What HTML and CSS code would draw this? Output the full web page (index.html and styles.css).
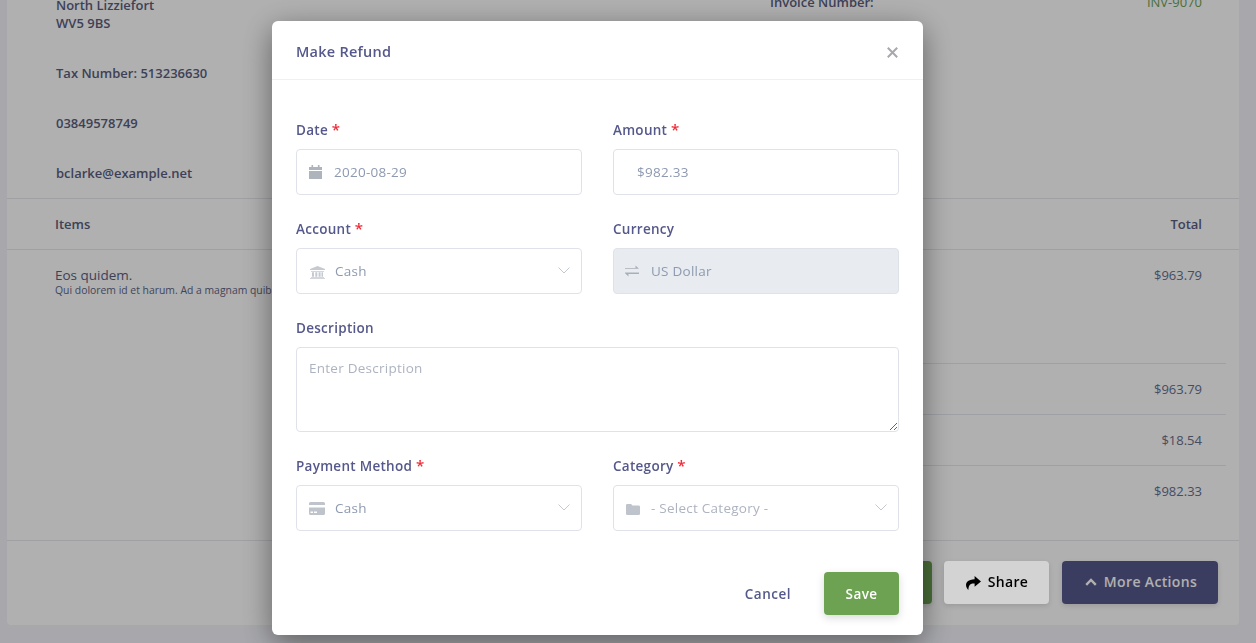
FILE: index.html
```html
<!DOCTYPE html>
<html lang="en">
<head>
<meta charset="utf-8">
<title>Make Refund</title>
<link rel="stylesheet" href="styles.css">
</head>
<body>
<main class="page">
  <section class="card">
    <div class="info">
      <div class="from">
        <p class="line">North Lizziefort<br>WV5 9BS</p>
        <p class="line">Tax Number: 513236630</p>
        <p class="line">03849578749</p>
        <p class="line">bclarke@example.net</p>
      </div>
      <div class="meta">
        <span>Invoice Number:</span>
        <span class="inv">INV-9070</span>
      </div>
    </div>
    <div class="thead"><span>Items</span><span>Total</span></div>
    <div class="item">
      <div class="item-text">
        <div class="item-name">Eos quidem.</div>
        <div class="item-desc">Qui dolorem id et harum. Ad a magnam quibusdam.</div>
      </div>
      <span class="amount">$963.79</span>
    </div>
    <div class="totals">
      <div class="total-row"><span class="amount">$963.79</span></div>
      <div class="total-row"><span class="amount">$18.54</span></div>
      <div class="total-row last"><span class="amount">$982.33</span></div>
    </div>
    <div class="actions">
      <button class="btn btn-green" type="button"></button>
      <button class="btn btn-share" type="button">
        <svg class="ico-share" viewBox="0 0 16 14"><path d="M9.600 0 16 5.400 9.600 10.800V7.500C5.800 7.300 3.600 8.300 3.400 14 .3 11.300-1.500 3.800 9.600 3.300Z"/></svg>
        Share
      </button>
      <button class="btn btn-more" type="button">
        <svg class="ico-up" viewBox="0 0 12 8"><path d="M1.200 6.800 6 2l4.800 4.800"/></svg>
        More Actions
      </button>
    </div>
  </section>
</main>

<div class="overlay">
  <div class="modal">
    <header class="modal-head">
      <h2>Make Refund</h2>
      <svg class="close" viewBox="0 0 11 11"><path d="M.8.800l9.400 9.400M10.200.800.800 10.200"/></svg>
    </header>
    <form class="modal-body">
      <div class="group">
        <label>Date <b>*</b></label>
        <div class="field">
          <svg class="ico ico-cal" viewBox="0 0 13 14"><path d="M2.500 0h1.600v2H8.900V0h1.600v2H13v3H0V2h2.500zM0 6h13v8H0z"/></svg>
          <span class="val">2020-08-29</span>
        </div>
      </div>
      <div class="group">
        <label>Amount <b>*</b></label>
        <div class="field field-amt"><span class="val">$982.33</span></div>
      </div>
      <div class="group">
        <label>Account <b>*</b></label>
        <div class="field">
          <svg class="ico ico-bank" viewBox="0 0 15 13"><path d="M7.500 0 15 3v1H0V3zM1 5h13v.8H1zM2 6.300h2v4.400H2zM5.300 6.300h2v4.400h-2zM8.600 6.300h2v4.400h-2zM11.500 6.300h1.500v4.400h-1.500zM1 11.200h13v.8H1zM0 12.300h15v.7H0z"/></svg>
          <span class="val">Cash</span>
          <svg class="caret" viewBox="0 0 12 7"><path d="M.5.500 6 6l5.500-5.500"/></svg>
        </div>
      </div>
      <div class="group">
        <label>Currency</label>
        <div class="field field-off">
          <svg class="ico ico-swap" viewBox="0 0 14 12"><path d="M0 3h10.500V.5L14 3.800H0zM14 7.500v1.500H3.500v2.500L0 8.200V7.500z"/></svg>
          <span class="val">US Dollar</span>
        </div>
      </div>
      <div class="group wide">
        <label>Description</label>
        <textarea class="area" placeholder="Enter Description"></textarea>
      </div>
      <div class="group">
        <label>Payment Method <b>*</b></label>
        <div class="field">
          <svg class="ico ico-cc" viewBox="0 0 16 13"><path d="M1.500 0h13A1.500 1.500 0 0 1 16 1.500V3H0V1.500A1.500 1.500 0 0 1 1.500 0zM0 5.500h16v6a1.500 1.500 0 0 1-1.500 1.500h-13A1.500 1.500 0 0 1 0 11.500zM1.500 9.500V11h2.500V9.500zM5 9.500V11h3V9.500z" fill-rule="evenodd"/></svg>
          <span class="val">Cash</span>
          <svg class="caret" viewBox="0 0 12 7"><path d="M.5.500 6 6l5.500-5.500"/></svg>
        </div>
      </div>
      <div class="group">
        <label>Category <b>*</b></label>
        <div class="field">
          <svg class="ico ico-folder" viewBox="0 0 14 11"><path d="M1.300 0h3.800l1.300 1.600h6.300A1.300 1.300 0 0 1 14 2.900v6.800A1.300 1.300 0 0 1 12.700 11H1.300A1.300 1.300 0 0 1 0 9.700V1.300A1.300 1.300 0 0 1 1.300 0z"/></svg>
          <span class="val muted">- Select Category -</span>
          <svg class="caret" viewBox="0 0 12 7"><path d="M.5.500 6 6l5.500-5.500"/></svg>
        </div>
      </div>
    </form>
    <footer class="modal-foot">
      <button class="link" type="button">Cancel</button>
      <button class="save" type="button">Save</button>
    </footer>
  </div>
</div>
</body>
</html>
```

FILE: styles.css
```css
* { box-sizing: border-box; }

html, body {
  margin: 0;
  height: 643px;
  overflow: hidden;
}

body {
  background: #f3f4fa;
  font-family: "Open Sans", "Noto Sans", sans-serif;
  color: #55588b;
}

.page {
  padding: 0 17px 0 7px;
}

.card {
  background: #fff;
  height: 625px;
  border-radius: 0 0 4px 4px;
  color: #5a5e80;
  font-size: 13px;
  overflow: hidden;
}

.info {
  display: flex;
  justify-content: space-between;
  height: 199px;
  padding: 0 37px 0 49px;
  border-bottom: 1px solid #e6e8ee;
  font-weight: 600;
}

.from { margin-top: -4px; width: 714px; }

.line {
  margin: 0 0 32px;
  line-height: 18px;
}

.meta {
  flex: 1;
  display: flex;
  justify-content: space-between;
  margin-top: -7px;
  line-height: 18px;
}

.inv { color: #6da252; font-weight: 400; }

.thead {
  display: flex;
  justify-content: space-between;
  align-items: center;
  height: 51px;
  padding: 0 37px 0 48px;
  border-bottom: 1px solid #e6e8ee;
  font-weight: 600;
}

.item {
  display: flex;
  justify-content: space-between;
  height: 113px;
  padding: 16px 37px 0 48px;
}

.item-name { font-size: 13.500px; line-height: 18px; }
.item-desc { font-size: 10.400px; line-height: 12px; color: #5f6585; }
.amount { line-height: 18px; color: #65708f; }

.totals { margin-left: 50%; padding-right: 13px; }

.total-row {
  display: flex;
  justify-content: flex-end;
  height: 51px;
  padding: 16px 24px 0 0;
  border-top: 1px solid #e6e8ee;
}

.total-row.last { height: 75px; }

.actions {
  display: flex;
  justify-content: flex-end;
  gap: 12px;
  padding: 20px 21px 0 0;
  border-top: 1px solid #e6e8ee;
}

.btn {
  display: flex;
  align-items: center;
  justify-content: center;
  gap: 7px;
  height: 43px;
  padding: 0 0 2px;
  border: 0;
  border-radius: 4px;
  font: 600 14px "Open Sans", sans-serif;
  letter-spacing: .35px;
  box-shadow: 0 2px 5px rgba(0, 0, 0, .12);
}

.btn-green { width: 120px; background: #6da252; color: #fff; }
.btn-share { width: 105px; background: #d3d3d3; color: #000; z-index: 20; }
.btn-more { width: 156px; margin-left: 1px; padding-left: 2px; background: #55588b; color: #fff; }

.ico-share { width: 16px; height: 14px; fill: #000; margin-top: 2px; }
.ico-up { width: 12px; height: 8px; fill: none; stroke: #fff; stroke-width: 2.400; }

.overlay {
  position: fixed;
  inset: 0;
  z-index: 10;
  display: flex;
  align-items: flex-start;
  padding: 21px 0 0 272px;
  background: rgba(0, 0, 0, .31);
}

.modal {
  width: 651px;
  background: #fff;
  border-radius: 6px;
  box-shadow: 0 8px 30px rgba(0, 0, 0, .45);
}

.modal-head {
  display: flex;
  align-items: center;
  justify-content: space-between;
  height: 59px;
  padding: 3px 25px 0 24px;
  border-bottom: 1px solid #eef0f4;
}

.modal-head h2 {
  margin: 0;
  font-size: 14.500px;
  font-weight: 600;
  letter-spacing: .25px;
}

.close {
  width: 11px;
  height: 11px;
  margin-top: 1px;
  fill: none;
  stroke: #a6a8ae;
  stroke-width: 2;
}

.modal-body {
  display: grid;
  grid-template-columns: 286px 286px;
  column-gap: 31px;
  row-gap: 24px;
  padding: 40px 24px 0;
}

.wide { grid-column: 1 / -1; }

.group label {
  display: block;
  height: 21px;
  margin-bottom: 8px;
  font-size: 13.500px;
  font-weight: 600;
  line-height: 21px;
  letter-spacing: .28px;
}

.group label b {
  color: #ee2b36;
  font-size: 15px;
  font-weight: 600;
  line-height: 15px;
}

.field {
  display: flex;
  align-items: center;
  height: 46px;
  padding: 0 11px 0 12px;
  border: 1px solid #e0e2ea;
  border-radius: 4px;
  background: #fff;
  font-size: 13.500px;
}

.field-amt { padding-left: 23px; }
.field-off { background: #e8ebef; padding-left: 11px; }

.val { color: #8d9ab1; letter-spacing: .25px; }
.muted { color: #adb3c0; }

.ico { flex: none; fill: #bfc3cb; }
.ico-cal { width: 13px; height: 14px; margin-right: 12px; fill: #aeb4bc; }
.ico-bank { width: 15px; height: 13px; margin: 2px 10px 0 1px; fill: #c5c9d1; }
.ico-swap { width: 14px; height: 12px; margin-right: 12px; fill: #a9afb9; }
.ico-cc { width: 16px; height: 13px; margin-right: 10px; }
.ico-folder { width: 14px; height: 11px; margin: 2px 11px 0 0; }

.caret {
  width: 12px;
  height: 7px;
  margin: -2px 0 0 auto;
  fill: none;
  stroke: #c4c8d0;
  stroke-width: 1;
}

.area {
  display: block;
  width: 100%;
  height: 85px;
  padding: 11px 12px;
  border: 1px solid #e0e2ea;
  border-radius: 4px;
  font: 13.500px "Open Sans", sans-serif;
  letter-spacing: .25px;
  resize: vertical;
}

.area::placeholder { color: #adb3c0; opacity: 1; }

.modal-foot {
  display: flex;
  align-items: center;
  justify-content: flex-end;
  gap: 33px;
  padding: 41px 24px 20px;
}

.link {
  padding: 0;
  border: 0;
  background: none;
  color: #55588b;
  font: 600 13.500px "Open Sans", sans-serif;
  letter-spacing: .5px;
}

.save {
  width: 75px;
  height: 43px;
  border: 0;
  border-radius: 4px;
  background: #6da252;
  color: #fff;
  font: 600 13.500px "Open Sans", sans-serif;
  letter-spacing: .4px;
  box-shadow: 0 3px 8px rgba(0, 0, 0, .15);
}
```
